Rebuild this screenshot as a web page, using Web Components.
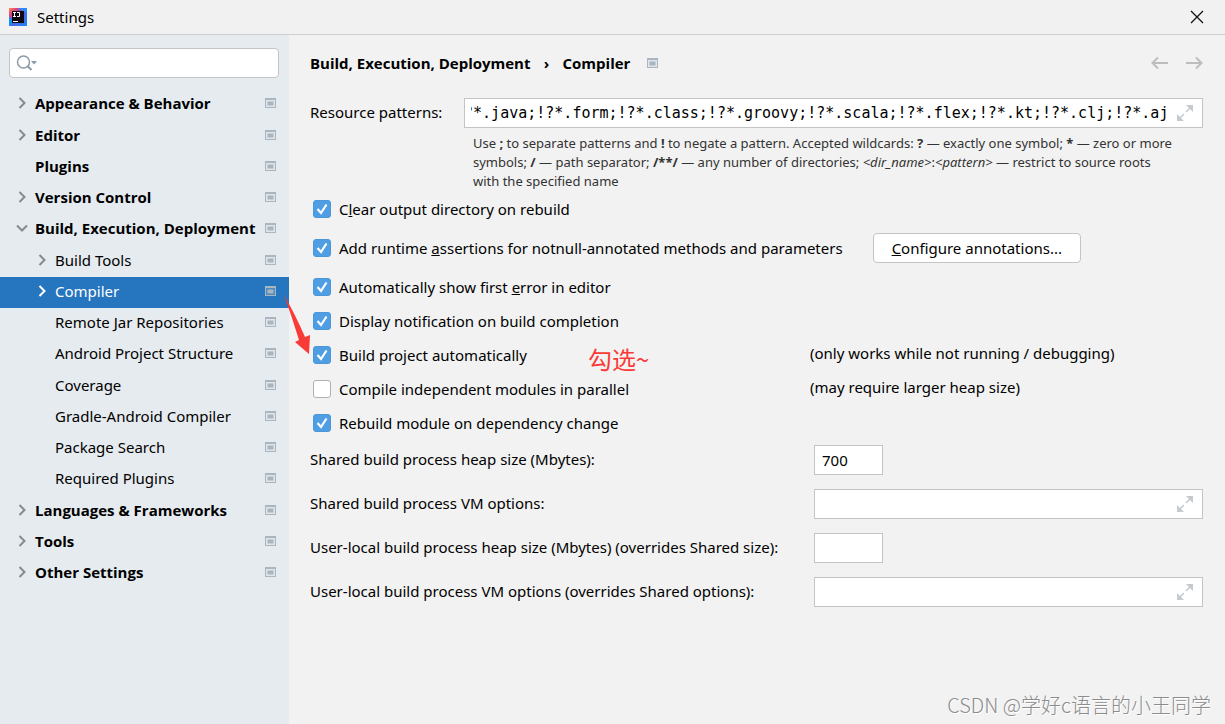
<!DOCTYPE html>
<html lang="en">
<head>
<meta charset="utf-8">
<meta name="viewport" content="width=device-width, initial-scale=1">
<title>Settings</title>
<style>
  html, body { margin: 0; height: 100%; }
  body { background: #f2f2f2; }
</style>
</head>
<body>
<settings-window></settings-window>
<script>
class Base extends HTMLElement {
  constructor() {
    super();
    this.attachShadow({ mode: 'open' });
  }
  connectedCallback() {
    if (!this.shadowRoot.firstChild) {
      this.shadowRoot.innerHTML = '<style>*{box-sizing:border-box}</style>' + this.render();
      this.ready();
    }
  }
  render() { return ''; }
  ready() {}
}

/* Small grey "project level" badge shown beside pages. */
class ProjectBadge extends Base {
  render() {
    return `<style>:host{display:block;flex:none;width:11px;height:10px}svg{display:block}</style>
    <svg width="11" height="10" viewBox="0 0 11 10" aria-hidden="true">
      <path fill="#a9b5bf" d="M0 0h11v10H0z"/><path fill="var(--badge-hole,#dfe5ea)" d="M1 2h9v7H1z"/><path fill="#a9b5bf" d="M2.500 3.500h6v4h-6z"/>
    </svg>`;
  }
}

class TitleBar extends Base {
  render() {
    return `<style>
      :host{display:flex;align-items:center;height:35px;padding:0 20px 0 9px;border-bottom:1px solid #cfcfcf;background:#f1f1f1}
      span{flex:1;margin-left:10px}
      svg{display:block}
      button{border:0;background:none;padding:0}
    </style>
    <svg width="18" height="18" viewBox="0 0 18 18" aria-hidden="true">
      <defs>
        <linearGradient id="a" x1="0" y1="0" x2="1" y2="1"><stop offset="0" stop-color="#fc8a4b"/><stop offset=".22" stop-color="#e0467c"/><stop offset=".45" stop-color="#5b5de8"/><stop offset="1" stop-color="#1689f5"/></linearGradient>
      </defs>
      <path fill="url(#a)" d="M0 0h18v18H0z"/>
      <path fill="#2d8cf7" d="M9 0h9v5z"/><path fill="#1590f5" d="M0 9l3 2v5l-3 2z"/>
      <path fill="#120812" d="M3 3h12v12H3z"/>
      <path fill="none" stroke="#fff" d="M4 4.500h3M5.500 4v4M4 8.500h3M8 4.500h2.500v4H8M4 13.500h5"/>
    </svg>
    <span>Settings</span>
    <button aria-label="Close"><svg width="16" height="16" viewBox="0 0 16 16"><path stroke="#111" stroke-width="1.300" d="M2 2l12 12M14 2L2 14"/></svg></button>`;
  }
}

class SearchBox extends Base {
  render() {
    return `<style>
      :host{display:flex;align-items:center;height:30px;background:#fff;border:1px solid #c2c5c8;border-radius:4px;padding:0 6px}
      svg{flex:none}
      input{flex:1;min-width:0;border:0;outline:0;background:none;font:inherit}
    </style>
    <svg width="22" height="18" viewBox="0 0 22 18" aria-hidden="true"><g fill="none" stroke="#8e9aa5" stroke-width="1.500"><circle cx="7.500" cy="8" r="6"/><path d="M11.500 12l4 4" stroke-width="2"/></g><path fill="#8e9aa5" d="M15 7h6l-3 3.500z"/></svg>
    <input type="text" aria-label="Search settings">`;
  }
}

/* One row of the page tree; attributes: arrow=right|down, level, selected. */
class NavItem extends Base {
  render() {
    const arrow = this.getAttribute('arrow');
    const d = arrow === 'down' ? 'M1 3.500l5 5 5-5' : 'M3.500 1l5 5-5 5';
    return `<style>
      :host{display:block;color:#000;font-weight:700;font-family:"Open Sans",sans-serif}
      :host([level="2"]){font-weight:400;font-family:inherit;--indent:36px}
      :host([selected]){background:#2675bf;color:#fff;--arrow:#fff;--badge-hole:#4d8bc4}
      a{display:flex;align-items:center;height:31px;padding:0 13px 4px var(--indent,16px);color:inherit;text-decoration:none}
      svg,i{flex:none;width:12px;height:12px;margin-right:7px}
      path{fill:none;stroke:var(--arrow,#868a8e);stroke-width:2}
      span{flex:1;white-space:nowrap}
      project-badge{margin-left:4px}
    </style>
    <a href="#">${arrow ? `<svg viewBox="0 0 12 12" aria-hidden="true"><path d="${d}"/></svg>` : '<i></i>'}<span><slot></slot></span><project-badge></project-badge></a>`;
  }
}

class NavTree extends Base {
  render() {
    return `<style>
      :host{display:flex;flex-direction:column;margin-top:11px}
      ::slotted(:nth-child(4n+2)){margin-top:1px}
    </style><slot></slot>`;
  }
}

class PageHeader extends Base {
  render() {
    return `<style>
      :host{display:flex;align-items:center;height:24px;font-weight:700;font-family:"Open Sans",sans-serif}
      .sep{width:32px;text-align:center}
      project-badge{margin-left:17px}
      .nav{margin-left:auto;display:flex;gap:16px}
      button{border:0;background:none;padding:0}
      svg{display:block;fill:none;stroke:#bdbdbd;stroke-width:2}
    </style>
    <span>Build, Execution, Deployment</span><span class="sep">›</span><span>Compiler</span><project-badge></project-badge>
    <div class="nav">
      <button aria-label="Back"><svg width="18" height="14" viewBox="0 0 18 14"><path d="M17 7H2M7 1.500L1.500 7 7 12.500"/></svg></button>
      <button aria-label="Forward"><svg width="18" height="14" viewBox="0 0 18 14"><path d="M1 7h15M11 1.500L16.500 7 11 12.500"/></svg></button>
    </div>`;
  }
}

/* Labelled text field; attributes: value, expand, mono, short. */
class FieldRow extends Base {
  render() {
    return `<style>
      :host{display:grid;grid-template-columns:var(--label,504px) 1fr;align-items:center}
      label{white-space:nowrap;padding-bottom:2px}
      .box{display:flex;align-items:center;height:30px;background:#fff;border:1px solid #c4c4c4;padding:0 8px 0 7px}
      :host([short]) .box{width:69px}
      input{flex:1;width:0;min-width:0;border:0;outline:0;padding:0;background:none;font:inherit;color:#000}
      :host([mono]) .box{padding-left:6px}
      :host([mono]) input{font-family:"DejaVu Sans Mono",monospace}
      button{border:0;background:none;padding:0;margin-left:8px}
      svg{display:block}
    </style>
    <label for="f"><slot></slot></label>
    <div class="box"><input id="f" type="text" value="${this.getAttribute('value') || ''}">
    ${this.hasAttribute('expand') ? `<button aria-label="Expand"><svg width="18" height="18" viewBox="0 0 18 18"><path fill="#c5cace" d="M10 1h7v7zM1 10v7h7z"/><path stroke="#c5cace" stroke-width="1.500" d="M15 3l-5 5M3 15l5-5"/></svg></button>` : ''}</div>`;
  }
  ready() {
    if (this.hasAttribute('mono')) {
      const input = this.shadowRoot.querySelector('input');
      input.scrollLeft = input.scrollWidth;
    }
  }
}

class CheckRow extends Base {
  render() {
    return `<style>
      :host{display:flex;align-items:center;height:34px;padding-left:3px}
      :host([tall]){height:44px}
      label{display:flex;align-items:center;white-space:nowrap}
      :host([hinted]) label{width:497px}
      ::slotted(span[slot]){padding-bottom:4px}
      input{appearance:none;flex:none;width:18px;height:18px;margin:0 8px 0 0;border:1px solid #b0b0b0;border-radius:3px;background:#fff}
      input:checked{border-color:#4b97d9;background:#4f9ee3 url("data:image/svg+xml,%3Csvg xmlns='http://www.w3.org/2000/svg' viewBox='0 0 16 16'%3E%3Cpath d='M3.500 8l3.500 4L12.500 3.500' fill='none' stroke='white' stroke-width='2.200'/%3E%3C/svg%3E")}
    </style>
    <label><input type="checkbox" ${this.hasAttribute('checked') ? 'checked' : ''}><span><slot></slot></span></label><slot name="after"></slot>`;
  }
}

class PushButton extends Base {
  render() {
    return `<style>
      :host{display:block;margin-left:30px}
      button{height:30px;padding:0 18px;border:1px solid #c4c4c4;border-radius:4px;background:#fff;color:#000;font:inherit;white-space:nowrap}
    </style><button><slot></slot></button>`;
  }
}

/* Red hand-made note: arrow plus a word, laid over the window. */
class RedNote extends Base {
  render() {
    return `<style>
      :host{position:absolute;left:284px;top:292px;pointer-events:none;color:#f93a37}
      svg{display:block}
      span{position:absolute;left:304px;top:50px;font:24px/34px "Noto Sans CJK SC",sans-serif;white-space:nowrap}
    </style>
    <svg width="28" height="64" viewBox="0 0 28 64" aria-hidden="true"><path fill="#f93a37" d="M0 3Q11 22 21 45l5-2-1 19L11 50l4-2Q8 25 0 3z"/></svg>
    <span>勾选~</span>`;
  }
}

class WaterMark extends Base {
  render() {
    return `<style>
      :host{position:absolute;right:14px;bottom:4px;font:300 20px/30px "Noto Sans CJK SC",sans-serif;color:#8c8c8c;text-shadow:1px 1px 0 #fff;white-space:nowrap;pointer-events:none}
    </style>CSDN @学好c语言的小王同学`;
  }
}

class SettingsWindow extends Base {
  render() {
    return `<style>
      :host{position:relative;display:flex;flex-direction:column;min-height:100%;overflow:hidden;background:#f2f2f2;color:#000;font:15px/20px "Noto Sans","Noto Sans CJK SC",sans-serif}
      .body{flex:1;display:flex}
      nav{flex:none;width:289px;background:#e6ebef;padding-top:13px}
      search-box{margin:0 10px 0 9px}
      main{flex:1;min-width:0;padding:16px 22px 0 21px}
      .patterns{margin-top:23px;--label:154px}
      .help{margin:6px 0 1px 163px;font-size:13px;line-height:19px;color:#333}
      .fields{display:grid;gap:14px;margin-top:5px}
    </style>
    <title-bar></title-bar>
    <div class="body">
      <nav aria-label="Settings pages">
        <search-box></search-box>
        <nav-tree>
          <nav-item arrow="right">Appearance &amp; Behavior</nav-item>
          <nav-item arrow="right">Editor</nav-item>
          <nav-item>Plugins</nav-item>
          <nav-item arrow="right">Version Control</nav-item>
          <nav-item arrow="down">Build, Execution, Deployment</nav-item>
          <nav-item level="2" arrow="right">Build Tools</nav-item>
          <nav-item level="2" arrow="right" selected>Compiler</nav-item>
          <nav-item level="2">Remote Jar Repositories</nav-item>
          <nav-item level="2">Android Project Structure</nav-item>
          <nav-item level="2">Coverage</nav-item>
          <nav-item level="2">Gradle-Android Compiler</nav-item>
          <nav-item level="2">Package Search</nav-item>
          <nav-item level="2">Required Plugins</nav-item>
          <nav-item arrow="right">Languages &amp; Frameworks</nav-item>
          <nav-item arrow="right">Tools</nav-item>
          <nav-item arrow="right">Other Settings</nav-item>
        </nav-tree>
      </nav>
      <main>
        <page-header></page-header>
        <field-row class="patterns" mono expand value="!?*.java;!?*.form;!?*.class;!?*.groovy;!?*.scala;!?*.flex;!?*.kt;!?*.clj;!?*.aj">Resource patterns:</field-row>
        <p class="help">Use <b>;</b> to separate patterns and <b>!</b> to negate a pattern. Accepted wildcards: <b>?</b> — exactly one symbol; <b>*</b> — zero or more<br>symbols; <b>/</b> — path separator; <b>/**/</b> — any number of directories; <i>&lt;dir_name&gt;</i>:<i>&lt;pattern&gt;</i> — restrict to source roots<br>with the specified name</p>
        <check-row checked>C<u>l</u>ear output directory on rebuild</check-row>
        <check-row checked tall>Add runtime <u>a</u>ssertions for notnull-annotated methods and parameters<push-button slot="after"><u>C</u>onfigure annotations...</push-button></check-row>
        <check-row checked>Automatically show first <u>e</u>rror in editor</check-row>
        <check-row checked>Display notification on build completion</check-row>
        <check-row checked hinted>Build project automatically<span slot="after">(only works while not running / debugging)</span></check-row>
        <check-row hinted>Compile independent modules in parallel<span slot="after">(may require larger heap size)</span></check-row>
        <check-row checked>Rebuild module on dependency change</check-row>
        <div class="fields">
          <field-row short value="700">Shared build process heap size (Mbytes):</field-row>
          <field-row expand>Shared build process VM options:</field-row>
          <field-row short>User-local build process heap size (Mbytes) (overrides Shared size):</field-row>
          <field-row expand>User-local build process VM options (overrides Shared options):</field-row>
        </div>
      </main>
    </div>
    <red-note></red-note>
    <water-mark></water-mark>`;
  }
}

const parts = {
  'project-badge': ProjectBadge, 'title-bar': TitleBar, 'search-box': SearchBox,
  'nav-item': NavItem, 'nav-tree': NavTree, 'page-header': PageHeader,
  'field-row': FieldRow, 'check-row': CheckRow, 'push-button': PushButton,
  'red-note': RedNote, 'water-mark': WaterMark, 'settings-window': SettingsWindow
};
for (const name in parts) customElements.define(name, parts[name]);
</script>
</body>
</html>
